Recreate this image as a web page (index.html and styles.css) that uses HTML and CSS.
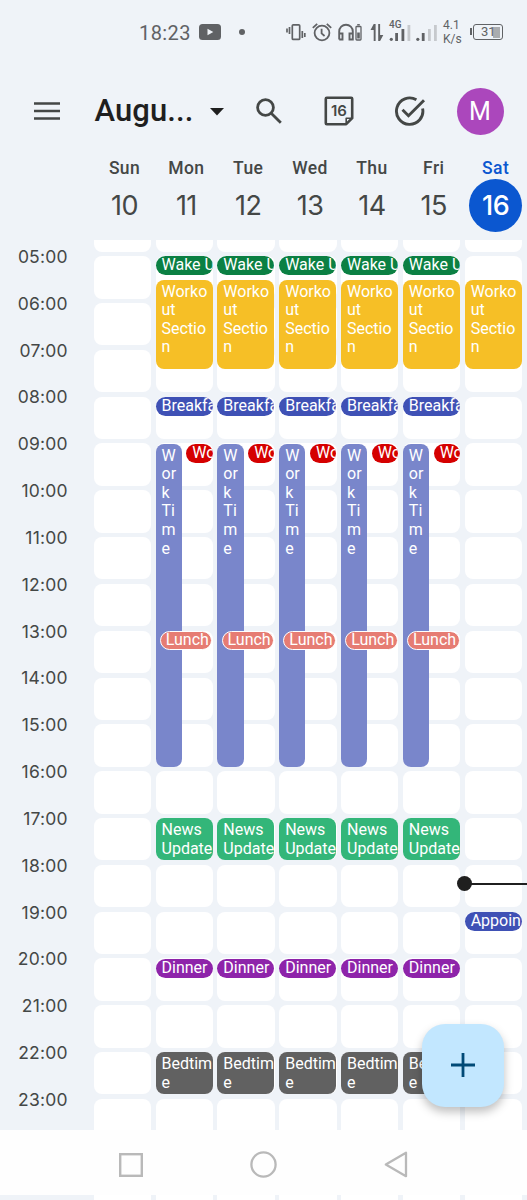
FILE: index.html
```html
<!DOCTYPE html>
<html lang="en">
<head>
    <meta charset="UTF-8">
    <meta name="viewport" content="width=device-width, initial-scale=1.0">
    <title>Calendar</title>
    <link rel="stylesheet" href="styles.css">
</head>
<body>
    <div class="phone">
        <div class="status-bar">
            <span class="clock">18:23</span>
            <svg class="youtube" width="22" height="16" viewBox="0 0 22 16"><rect width="22" height="16" rx="3.5" fill="#606265"/><path d="M8.5 4.8v6.4l5.8-3.2z" fill="#eff3f8"/></svg>
            <span class="dot"></span>
            <svg class="vibrate" width="20" height="24" viewBox="0 0 20 24" fill="none" stroke="#606265" stroke-width="1.7"><rect x="6.3" y="4.8" width="7.4" height="14.6" rx="1"/><path d="M1 8.5v4M3.5 7v7M16.3 11v7M18.8 13v4"/></svg>
            <svg class="alarm" width="20" height="24" viewBox="0 0 20 24" fill="none" stroke="#606265" stroke-width="1.8"><circle cx="10" cy="13" r="7.4"/><path d="M9.6 8.8v4.6l3 2.6M.8 7.8l4.4-3.9M19.2 7.8l-4.4-3.9"/></svg>
            <svg class="headset" width="25" height="24" viewBox="0 0 25 24" fill="none" stroke="#606265" stroke-width="1.9"><path d="M1.2 19.5v-8a6.8 6.8 0 0 1 13.6 0v8h-3.3v-6h3.3M1.2 13.5h3.3v6H1.2"/><rect x="18" y="6.5" width="5" height="13.5" rx=".8" stroke-width="1.3"/><path d="M19.2 4.8h2.6" stroke-width="1.5"/><path d="M20.5 12.5v6" stroke-width="2.6"/></svg>
            <svg class="arrows" width="14" height="24" viewBox="0 0 14 24" fill="#606265"><path d="M3.7 4h1.900v17H3.700v-11H.5zM8.200 4h1.900v11h3.200L10.100 21H8.200z"/></svg>
            <div class="signal-4g">
                <span>4G</span>
                <svg width="24" height="24" viewBox="0 0 24 24" fill="#606265"><circle cx="2.300" cy="19.300" r="1.600"/><rect x="6.200" y="13" width="2.800" height="8"/><rect x="12.500" y="9" width="2.800" height="12"/><rect x="18.500" y="5" width="2.800" height="16" fill="#c6c9cd"/></svg>
            </div>
            <svg class="signal" width="21" height="24" viewBox="0 0 21 24" fill="#606265"><circle cx="1.800" cy="19.300" r="1.600"/><rect x="5.800" y="13" width="2.800" height="8"/><rect x="12" y="9" width="2.800" height="12" fill="#c6c9cd"/><rect x="18" y="5" width="2.800" height="16" fill="#c6c9cd"/></svg>
            <div class="speed">4.1<br>K/s</div>
            <div class="battery"><span class="battery-text">31</span></div>
        </div>

        <div class="toolbar">
            <svg class="menu" width="26" height="18" viewBox="0 0 26 18" stroke="#444746" stroke-width="2.5"><path d="M0 1.500h26M0 9h26M0 16.500h26"/></svg>
            <h1 class="month">Augu...</h1>
            <svg class="caret" width="14" height="8" viewBox="0 0 14 8" fill="#1f1f1f"><path d="M0 0h14L7 7.500z"/></svg>
            <svg class="search" width="28" height="28" viewBox="0 0 28 28" fill="none" stroke="#444746" stroke-width="2.8"><circle cx="10.500" cy="10.500" r="7.900"/><path d="M16.200 16.200l9.600 9.600"/></svg>
            <div class="today-icon">
                <svg width="30" height="30" viewBox="0 0 30 30" fill="none" stroke="#444746" stroke-width="2.6" stroke-linejoin="round"><path d="M2.800 1.800h24.400q1 0 1 1v19.400l-6 6H2.800q-1 0-1-1V2.800q0-1 1-1z"/><path d="M28 22.200h-5.800v5.800" stroke-width="1.6"/></svg>
                <span>16</span>
            </div>
            <svg class="tasks" width="32" height="32" viewBox="0 0 32 32" fill="none" stroke="#444746" stroke-width="2.9"><path d="M22.400 4.800A13.200 13.200 0 1 0 28.600 13.500"/><path d="M8.500 14.800l6 6L30 5.300"/></svg>
            <div class="avatar">M</div>
        </div>

        <div class="days" id="days"></div>

        <div class="calendar">
            <div class="hours" id="hours"></div>
            <div class="week" id="week"></div>
        </div>

        <button class="fab" aria-label="Create">
            <svg width="24" height="24" viewBox="0 0 24 24" stroke="#004a77" stroke-width="2.8"><path d="M0 12h24M12 0v24"/></svg>
        </button>

        <div class="nav-bar">
            <svg width="24" height="24" viewBox="0 0 24 24" fill="none" stroke="#b9b9b9" stroke-width="2.4"><rect x="1.200" y="1.200" width="21.600" height="21.600"/></svg>
            <svg width="27" height="27" viewBox="0 0 27 27" fill="none" stroke="#b9b9b9" stroke-width="2.3"><circle cx="13.500" cy="13.500" r="12.100"/></svg>
            <svg width="24" height="27" viewBox="0 0 24 27" fill="none" stroke="#b9b9b9" stroke-width="2.3" stroke-linejoin="round"><path d="M22 1.800v23.400L1.800 13.500z"/></svg>
        </div>
    </div>

    <script>
        var dayNames = ['Sun', 'Mon', 'Tue', 'Wed', 'Thu', 'Fri', 'Sat'];
        var firstDate = 10;
        var today = 6;
        var firstHour = 4;

        // start and end are in hours
        var workday = [
            { title: 'Wake Up', type: 'wake', start: 5, end: 5.41 },
            { title: 'Worko\nut\nSectio\nn', type: 'workout', start: 5.5, end: 7.4 },
            { title: 'Breakfast', type: 'breakfast', start: 8, end: 8.41 },
            { title: 'W\nor\nk\nTi\nm\ne', type: 'work', start: 9, end: 15.9 },
            { title: 'Work', type: 'meeting', start: 9, end: 9.41 },
            { title: 'Lunch', type: 'lunch', start: 13, end: 13.41 },
            { title: 'News\nUpdate', type: 'news', start: 17, end: 17.9 },
            { title: 'Dinner', type: 'dinner', start: 20, end: 20.41 },
            { title: 'Bedtim\ne', type: 'bedtime', start: 22, end: 22.9 }
        ];
        var saturday = [
            workday[1],
            { title: 'Appointment', type: 'breakfast', start: 19, end: 19.41 }
        ];

        var days = '';
        var week = '';
        dayNames.forEach(function (name, i) {
            days += `<div class="day-head ${i === today ? 'today' : ''}"><span class="day-name">${name}</span><span class="day-number">${firstDate + i}</span></div>`;

            var cells = '';
            for (var h = firstHour; h < 24; h++) {
                cells += '<div class="cell"></div>';
            }
            var list = i === 0 ? [] : (i === today ? saturday : workday);
            var events = list.map(function (e) {
                var size = e.end - e.start < 0.5 ? 'short' : '';
                return `<div class="event ${e.type} ${size}" style="--start: ${e.start - firstHour}; --length: ${(e.end - e.start).toFixed(2)}">${e.title}</div>`;
            }).join('');
            var now = i === today ? '<div class="now" style="--start: 14.375"></div>' : '';
            week += `<div class="day">${cells}<div class="cell last"></div>${events}${now}</div>`;
        });

        var hours = '';
        for (var h = 5; h < 24; h++) {
            hours += `<div class="hour">${String(h).padStart(2, '0')}:00</div>`;
        }

        document.getElementById('days').innerHTML = days;
        document.getElementById('week').innerHTML = week;
        document.getElementById('hours').innerHTML = hours;
    </script>
</body>
</html>
```

FILE: styles.css
```css
* {
    box-sizing: border-box;
}
body {
    margin: 0;
    font-family: Roboto, 'Liberation Sans', sans-serif;
    background-color: #eff3f8;
    color: #444746;
}
svg {
    display: block;
    flex: none;
}
.phone {
    --hour: 46.83px;
    position: relative;
    width: 527px;
    height: 1200px;
    overflow: hidden;
    display: flex;
    flex-direction: column;
}

/* status bar */
.status-bar {
    height: 64px;
    padding-left: 139px;
    display: flex;
    align-items: center;
    color: #606265;
    flex: none;
}
.clock {
    width: 60px;
    font-size: 20px;
    letter-spacing: 0.4px;
    padding-top: 2px;
}
.dot {
    width: 6px;
    height: 6px;
    margin: 0 41px 0 18px;
    border-radius: 50%;
    background-color: #606265;
}
.vibrate {
    margin-right: 6px;
}
.alarm {
    margin-right: 6px;
}
.headset {
    margin-right: 7px;
}
.arrows {
    margin-right: 5px;
}
.signal-4g {
    position: relative;
    margin-right: 3px;
}
.signal-4g span {
    position: absolute;
    left: 0;
    top: -1px;
    font-size: 10px;
    font-weight: 500;
    line-height: 12px;
}
.signal {
    margin-right: 6px;
}
.speed {
    width: 28px;
    font-size: 12px;
    line-height: 14px;
}
.battery {
    position: relative;
    width: 30px;
    height: 16px;
    margin-left: 2px;
    border: 1.5px solid #606265;
    border-radius: 3px;
    background: linear-gradient(#aaacaf, #aaacaf) 19px 1.5px / 7px 11px no-repeat;
}
.battery::before {
    content: '';
    position: absolute;
    left: -4px;
    top: 3px;
    width: 2px;
    height: 7px;
    background-color: #606265;
}
.battery-text {
    display: block;
    padding-left: 7px;
    font-size: 13px;
    line-height: 14px;
}

/* toolbar */
.toolbar {
    height: 94px;
    padding-left: 34px;
    display: flex;
    align-items: center;
    flex: none;
}
.menu {
    margin-right: 34.5px;
}
.month {
    width: 115.5px;
    margin: 0;
    font-size: 31px;
    font-weight: 500;
    line-height: 36px;
    letter-spacing: 0.1px;
    color: #1f1f1f;
}
.caret {
    margin: 2px 31px 0 0;
}
.search {
    margin-right: 41px;
}
.today-icon {
    position: relative;
    margin-right: 40px;
}
.today-icon span {
    position: absolute;
    inset: 0 0 1px;
    display: flex;
    align-items: center;
    justify-content: center;
    font-family: Inter, sans-serif;
    font-size: 15px;
    font-weight: 600;
}
.tasks {
    margin-right: 30.5px;
}
.avatar {
    width: 47px;
    height: 47px;
    border-radius: 50%;
    background-color: #ab47bc;
    color: #fff;
    font-size: 25px;
    line-height: 48px;
    text-align: center;
}

/* day names */
.days {
    height: 82px;
    padding-left: 93.6px;
    display: grid;
    grid-template-columns: repeat(7, 61.85px);
    flex: none;
}
.day-head {
    display: flex;
    flex-direction: column;
    align-items: center;
}
.day-name {
    font-size: 17.5px;
    font-weight: 500;
    line-height: 20px;
    letter-spacing: 0.4px;
}
.day-number {
    width: 53px;
    height: 53px;
    margin-top: 1px;
    border-radius: 50%;
    font-family: Inter, sans-serif;
    font-size: 27px;
    line-height: 54px;
    letter-spacing: -0.5px;
    text-align: center;
}
.today .day-name {
    color: #0b57d0;
}
.today .day-number {
    background-color: #0b57d0;
    color: #fff;
    font-weight: 500;
}

/* calendar */
.calendar {
    flex: 1;
    display: flex;
    overflow: hidden;
}
.hours {
    width: 93.7px;
    padding-right: 26px;
    flex: none;
}
.hour {
    height: var(--hour);
    font-family: Inter, sans-serif;
    font-size: 17.5px;
    line-height: 34px;
    letter-spacing: 0.2px;
    text-align: right;
}
.week {
    display: grid;
    grid-template-columns: repeat(7, 57.4px);
    column-gap: 4.45px;
    margin-top: -30.6px;
}
.day {
    position: relative;
}
.cell {
    height: 42.4px;
    margin-bottom: 4.43px;
    border-radius: 8px;
    background-color: #fff;
}
.cell.last {
    height: 80px;
}
.event {
    position: absolute;
    left: 0;
    top: calc(var(--start) * var(--hour));
    width: 57px;
    height: calc(var(--length) * var(--hour));
    padding: 3px 0 0 6px;
    border-radius: 8px;
    overflow: hidden;
    color: #fff;
    font-size: 16px;
    line-height: 18.6px;
    white-space: pre;
}
.event.short {
    padding-top: 0;
    border-radius: 9.5px;
}
.wake {
    background-color: #0b8043;
}
.workout {
    background-color: #f6bf26;
}
.breakfast {
    background-color: #3f51b5;
}
.work {
    width: 26.3px;
    background-color: #7986cb;
}
.meeting {
    left: 30.8px;
    width: 26.2px;
    background-color: #d50000;
}
.lunch {
    left: 4.2px;
    width: 52.6px;
    padding-left: 5px;
    border: 1.5px solid #fff;
    background-color: #e67c73;
    line-height: 16.5px;
}
.news {
    background-color: #33b679;
}
.dinner {
    background-color: #8e24aa;
}
.bedtime {
    background-color: #616161;
}
.now {
    position: absolute;
    left: 0;
    top: calc(var(--start) * var(--hour));
    width: 64px;
    height: 2px;
    background-color: #1f1f1f;
}
.now::before {
    content: '';
    position: absolute;
    left: -7.5px;
    top: -6.5px;
    width: 15px;
    height: 15px;
    border-radius: 50%;
    background-color: #1f1f1f;
}

.fab {
    position: absolute;
    right: 23px;
    bottom: 93.5px;
    width: 82.5px;
    height: 83px;
    padding: 0;
    border: none;
    border-radius: 23px;
    display: flex;
    align-items: center;
    justify-content: center;
    background-color: #c2e7ff;
    box-shadow: 0 5px 10px rgba(0,0,0,0.25);
}

/* lies over the bottom of the calendar */
.nav-bar {
    position: absolute;
    left: 0;
    right: 0;
    bottom: 5px;
    height: 65px;
    padding: 4px 119px 0;
    display: flex;
    align-items: center;
    justify-content: space-between;
    background-color: #fefefe;
}
```
